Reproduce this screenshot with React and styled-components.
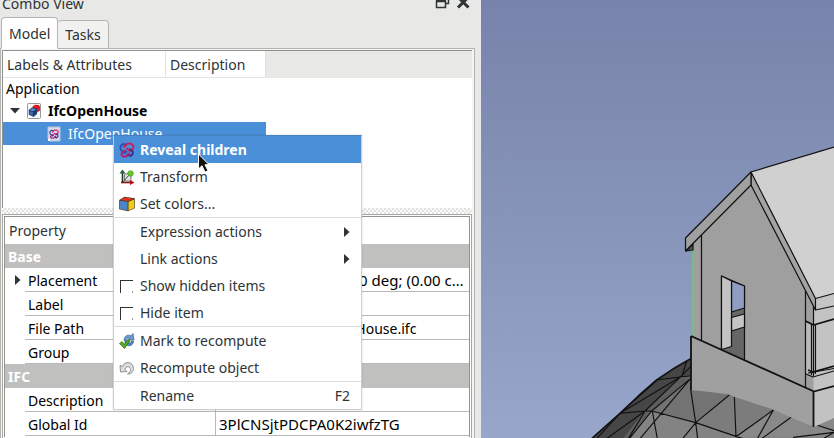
import React from "react";
import styled, { createGlobalStyle } from "styled-components";

const GlobalStyle = createGlobalStyle`
  * { box-sizing: border-box; }
  body {
    margin: 0;
    overflow: hidden;
    background: #e8e8e6;
    color: #2e3436;
    font: 14px/22px "Noto Sans", sans-serif;
    white-space: nowrap;
  }
  button, input { font: inherit; color: inherit; margin: 0; }
`;

const Window = styled.main`
  display: grid;
  grid-template-columns: minmax(0, 481fr) minmax(0, 353fr);
  height: 100vh;
  overflow: hidden;
`;

const Dock = styled.section`
  display: flex;
  flex-direction: column;
  min-width: 0;
  padding-right: 6px;
`;

const TitleBar = styled.header`
  display: flex;
  justify-content: space-between;
  height: 17px;
  padding: 0 4px 0 2px;
`;

const Title = styled.h1`
  margin: 0;
  font-size: 14px;
  font-weight: 400;
  line-height: 8px;
`;

const TitleButtons = styled.div`
  display: flex;
  gap: 6px;
`;

const TitleButton = styled.button`
  display: flex;
  width: 15px;
  height: 9px;
  padding: 0;
  border: 0;
  background: none;
`;

const TabBar = styled.div`
  display: flex;
  align-items: flex-end;
  height: 32px;
  padding-left: 1px;
  position: relative;
  z-index: 1;
`;

const Tab = styled.button`
  height: ${(p) => (p.$active ? 32 : 29)}px;
  padding: ${(p) => (p.$active ? 2 : 0)}px 7px 0;
  border: 1px solid #b4b4b1;
  border-left-width: ${(p) => (p.$active ? 1 : 0)}px;
  border-bottom-color: ${(p) => (p.$active ? "#fff" : "#b4b4b1")};
  border-radius: 4px 4px 0 0;
  background: ${(p) => (p.$active ? "#fff" : "#f1f1f0")};
`;

const Pane = styled.div`
  display: flex;
  flex: 1;
  flex-direction: column;
  margin-top: -1px;
  padding: 1px 2px 0 1px;
  border: solid #b4b4b1;
  border-width: 1px 1px 0 1px;
  background: #f4f4f3;
`;

const TreeFrame = styled.div`
  flex: 0 0 158px;
  border: solid #92928f;
  border-width: 1px 0 0 1px;
  background: #fff;
`;

const TreeHeader = styled.div`
  display: grid;
  grid-template-columns: 163px 100px 1fr;
  height: 27px;
  background: #e8e8e6;
`;

const HeaderCell = styled.div`
  padding: 3px 4px 1px;
  border: solid #e2e2e0;
  border-width: 0 1px 1px 0;
  background: #fff;
`;

const Tree = styled.ul`
  margin: 0;
  padding: 0;
  list-style: none;
  color: #000;
`;

const TreeItem = styled.li`
  display: flex;
  align-items: center;
  gap: 6px;
  width: ${(p) => (p.$selected ? "263px" : "auto")};
  height: ${(p) => (p.$selected ? 23 : 22)}px;
  padding-left: ${(p) => p.$indent}px;
  background: ${(p) => (p.$selected ? "#4a90d9" : "none")};
  color: ${(p) => (p.$selected ? "#fff" : "#000")};
  font-weight: ${(p) => (p.$bold ? 700 : 400)};
`;

const Splitter = styled.div`
  flex: 0 0 6px;
  background: repeating-conic-gradient(#e2e2e0 0 25%, #fafafa 0 50%) 0 0 / 4px 4px;
`;

const PropertyOuter = styled.div`
  flex: 1;
  padding: 1px;
  border: solid #a8a8a5;
  border-width: 1px 1px 0 1px;
  background: #fff;
`;

const PropertyFrame = styled.div`
  height: 100%;
  border: solid #92928f;
  border-width: 1px 1px 0 1px;
`;

const PropertyTable = styled.table`
  width: 100%;
  border-collapse: separate;
  border-spacing: 0;
  table-layout: fixed;
  color: #000;
  line-height: 20px;
  text-align: left;

  th, td { padding: 0; overflow: hidden; font-weight: 400; }
`;

const PropertyHeader = styled.th`
  height: 27px;
  line-height: 27px;
  color: #2e3436;

  && { padding-left: 4px; }
`;

const GroupCell = styled.th`
  height: 24px;
  background: #c0c0be;
  color: #fff;

  && { padding: 1px 0 0 3px; font-weight: 700; }
`;

const IndentCell = styled.td`
  height: 24px;
  line-height: 0;

  && { padding-left: 10px; }
`;

const NameCell = styled.th`
  height: 24px;
  border: solid #b8b8b6;
  border-width: 0 1px 1px 0;

  && { padding: 2px 0 0 3px; }
`;

const ValueCell = styled.td`
  height: 24px;
  border-bottom: 1px solid #b8b8b6;
  font-size: ${(p) => (p.$code ? 15 : 14)}px;

  && { padding: ${(p) => (p.$code ? 0 : 2)}px 0 0 3px; }
`;

const Viewport = styled.svg`
  display: block;
  width: 100%;
  height: 100%;
`;

const Menu = styled.div`
  position: absolute;
  top: 135px;
  left: 113px;
  z-index: 2;
  width: 249px;
  border: 1px solid #cfcfcd;
  border-top-color: #4581c1;
  background: #fff;
  box-shadow: 0 0 2px rgba(0, 0, 0, 0.15);
`;

const menuRow = `
  display: grid;
  grid-template-columns: 16px 1fr auto;
  align-items: center;
  column-gap: 5px;
  width: 100%;
  height: 27px;
  padding: 1px 11px 0 5px;
  border: 0;
  text-align: left;
`;

const MenuItem = styled.button`
  ${menuRow}
  background: ${(p) => (p.$active ? "#4a90d9" : "#fff")};

  && {
    color: ${(p) => (p.$active ? "#fff" : "#2e3436")};
    font-weight: ${(p) => (p.$active ? 700 : 400)};
  }
`;

const MenuCheck = styled.label`
  ${menuRow}
`;

const CheckBox = styled.input`
  appearance: none;
  width: 13px;
  height: 13px;
  margin-left: 1px;
  border: solid #2e3436;
  border-width: 1px 0 0 1px;
  background: radial-gradient(circle at 12px 11px, #999 0 1px, #fff 1px);
`;

const Separator = styled.hr`
  height: 1px;
  margin: 0;
  border: 0;
  background: #dcdcda;
`;

const Pointer = styled.svg`
  position: absolute;
  top: 153px;
  left: 197px;
  z-index: 3;
`;

const Icon = ({ size = 16, children }) => (
  <svg width={size} height={size} viewBox="0 0 16 16" aria-hidden="true">
    {children}
  </svg>
);

const Rings = () => (
  <g fill="none" strokeWidth="1.8" strokeLinejoin="round" strokeLinecap="round">
    <path d="M7.500 9.500 5.500 11 1.500 7.500V4L4 2 6.500 2.500" stroke="#2a4fae" />
    <path d="M5 5 8.500 1.700H12L14.500 4 14 6.500 11 9 8 6.500" stroke="#dd1450" />
    <path d="M11 7.500 13.800 9.500V12L11.500 14 8.500 12.500" stroke="#2f318f" />
    <path d="M6 8.500 2.500 11.500 2.500 13 4.500 14.500H7L10.500 11.500" stroke="#bb1670" />
  </g>
);

const IfcIcon = () => (
  <Icon>
    <Rings />
  </Icon>
);

const IfcDocIcon = () => (
  <Icon>
    <path d="M2 1h12v14H4l-2-2z" fill="#d6dded" stroke="#b4c3dd" />
    <g transform="translate(3 3) scale(.64)">
      <Rings />
    </g>
    <path d="M2 12l3 3H2z" fill="#fff" />
  </Icon>
);

const DocumentIcon = () => (
  <Icon>
    <rect x="1.5" y=".5" width="13" height="15" rx="1" fill="#f7f7f7" stroke="#999" />
    <path d="M6.500 3.500 9 1.700l4 .300 1 2V7.500l-3 2-4.500-3z" fill="#dc1c1c" />
    <path d="M2.700 7 6 4.500l5 1v5.500L7.500 14l-4.800-2.500z" fill="#1c3e74" />
    <path d="M3.700 7 6.200 5.400l3.800.800L7.200 8z" fill="#6791c9" />
    <path d="M3.500 8 6.800 9v3.600l-3.300-1.700z" fill="#3b69ad" />
  </Icon>
);

const TransformIcon = () => (
  <Icon>
    <path d="M5.500 5.500 10 4l2 3v5H5.500z" fill="#e3e6e0" stroke="#777" />
    <path d="M3.500 14V3" stroke="#173f24" strokeWidth="1.600" />
    <path d="M.500 4.500 3.500.500l3 4z" fill="#245b34" />
    <path d="M2 13.500h11" stroke="#8c1212" strokeWidth="1.600" />
    <path d="M11 11l4.500 2.500L11 16z" fill="#b41212" />
    <path d="M4 13l6-7" stroke="#444" />
    <circle cx="11.500" cy="4.500" r="2.800" fill="#65c72b" stroke="#438c1c" strokeWidth=".600" />
  </Icon>
);

const ColorsIcon = () => (
  <Icon>
    <path d="M.200 4 5.500.800l10.300 1.500v10L9 15.300.200 13.300z" fill="#4a3a22" />
    <path d="M1.300 4 5.700 1.500l9 1.200L9 5z" fill="#e8301f" />
    <path d="M.900 4.700 8.600 5.800v8.600L.900 12.700z" fill="#4d86c6" />
    <path d="M9.500 5.800 15.200 3.500v8.400l-5.700 2.500z" fill="#f0cc12" />
  </Icon>
);

const MarkIcon = () => (
  <Icon>
    <path d="M5 7.500C5 3 9 1 12 3l2-2.500 1 6.500H9l1.500-2C8.500 4 7 5.500 7 7.500z" fill="#6b9ad5" stroke="#33629f" strokeWidth=".700" />
    <path d="M14.500 8c0 4-4 6-7 4L6 13.500V8h5l-1.500 2c1.500.500 3-.500 3-2z" fill="#4f83c4" stroke="#33629f" strokeWidth=".700" />
    <path d="M.500 10.500 3 8.500l2.500 3L9 6l2 1.500-5.500 8z" fill="#59ad20" stroke="#2d6b0a" strokeWidth=".700" />
  </Icon>
);

const RecomputeIcon = () => (
  <Icon>
    <path
      d="M1 5.500 1.500 12 8 11.500 6 9.500C7 5.500 11.500 6 11.500 9.500c0 2-1 3-3 4.500C12.500 14 14.500 11.500 14.500 8.500 14.500 2 6 0 3.500 6.500z"
      fill="#dcdcdc"
      stroke="#858585"
      strokeWidth=".900"
    />
  </Icon>
);

const Arrow = ({ down }) => (
  <svg width={down ? 10 : 6} height={down ? 6 : 10} viewBox={down ? "0 0 10 6" : "0 0 6 10"} aria-hidden="true">
    <path d={down ? "M0 0h10L5 5.500z" : "M0 0v10l5.500-5z"} fill="#2e3436" />
  </svg>
);

const properties = [
  { group: "Base" },
  { name: "Placement", value: "[(0.00 0.00 1.00); 0.00 deg; (0.00 c…", code: true, expandable: true },
  { name: "Label", value: "IfcOpenHouse" },
  { name: "File Path", value: "/home/local/IfcOpenHouse.ifc" },
  { name: "Group", value: "" },
  { group: "IFC" },
  { name: "Description", value: "" },
  { name: "Global Id", value: "3PlCNSjtPDCPA0K2iwfzTG", code: true },
];

function Properties() {
  return (
    <PropertyTable>
      <colgroup>
        <col width="20" />
        <col width="191" />
        <col />
      </colgroup>
      <thead>
        <tr>
          <PropertyHeader colSpan={3}>Property</PropertyHeader>
        </tr>
      </thead>
      <tbody>
        {properties.map((row) =>
          row.group ? (
            <tr key={row.group}>
              <GroupCell colSpan={3}>{row.group}</GroupCell>
            </tr>
          ) : (
            <tr key={row.name}>
              <IndentCell>{row.expandable && <Arrow />}</IndentCell>
              <NameCell scope="row">{row.name}</NameCell>
              <ValueCell $code={row.code}>{row.value}</ValueCell>
            </tr>
          )
        )}
      </tbody>
    </PropertyTable>
  );
}

function ContextMenu() {
  return (
    <Menu role="menu">
      <MenuItem $active role="menuitem"><IfcIcon />Reveal children</MenuItem>
      <MenuItem role="menuitem"><TransformIcon />Transform</MenuItem>
      <MenuItem role="menuitem"><ColorsIcon />Set colors...</MenuItem>
      <Separator />
      <MenuItem role="menuitem"><i /><span>Expression actions</span><Arrow /></MenuItem>
      <MenuItem role="menuitem"><i /><span>Link actions</span><Arrow /></MenuItem>
      <MenuCheck><CheckBox type="checkbox" />Show hidden items</MenuCheck>
      <MenuCheck><CheckBox type="checkbox" />Hide item</MenuCheck>
      <Separator />
      <MenuItem role="menuitem"><MarkIcon />Mark to recompute</MenuItem>
      <MenuItem role="menuitem"><RecomputeIcon />Recompute object</MenuItem>
      <Separator />
      <MenuItem role="menuitem"><i /><span>Rename</span><span>F2</span></MenuItem>
    </Menu>
  );
}

function House() {
  return (
    <Viewport viewBox="481 0 353 438" preserveAspectRatio="xMaxYMax slice" role="img" aria-label="House model">
      <defs>
        <linearGradient id="sky" x1="0" y1="0" x2="0" y2="1">
          <stop offset="0" stopColor="#7783aa" />
          <stop offset="1" stopColor="#98a6cb" />
        </linearGradient>
      </defs>
      <rect x="281" y="0" width="553" height="438" fill="url(#sky)" />

      <g transform="translate(580 270) scale(.33333)" stroke="#111" strokeWidth="3.500" strokeLinejoin="round" fill="none">
        <path d="M332 266 285 293 230 330 175 378 120 430 35 506H770V440L700 400 332 300z" fill="#838383" stroke="none" />
        <path d="M332 266 285 293 230 330 120 430 35 506H130L195 423 300 322 332 318z" fill="#464646" stroke="none" />
        <path d="M300 322 195 423 130 506H148L215 423 332 322z" fill="#5e5e5e" stroke="none" />
        <path d="M332 325 215 423 347 458 448 375 332 355z" fill="#737373" stroke="none" />
        <path d="M448 375 347 458 470 500 580 420z" fill="#7c7c7c" stroke="none" />
        <path d="M580 420 470 500H640L762 487V440z" fill="#898989" stroke="none" />
        <path d="M332 266 285 293 230 330 175 378 120 430 35 506" strokeWidth="5" />
        <path d="M230 330 300 321 332 318M320 274 305 321M332 290 300 322 120 430M230 332 120 430 195 423 215 423M300 322 195 423 80 506M120 430 50 506M195 423 145 506M332 325 215 423 148 506M215 423 347 458 470 500 490 506M217 423 232 506M332 358 347 458 353 506M448 375 347 458 308 506M463 380 468 500 580 420 532 506M635 440 545 506M640 502 762 487M710 465 762 482M762 487 730 506M332 325 180 506" />
      </g>

      <g stroke="#111" strokeWidth="1.200" strokeLinejoin="round">
        <path d="M814 391 834 386V418L814 427z" fill="#c2c2c2" stroke="none" />
        <path d="M691 336 814 391V427L790 417 772 409 735 397 728 394 691 390z" fill="#a0a0a0" stroke="none" />
        <path d="M693 244 751 185 816 308 814 391 693 337z" fill="#9f9f9f" stroke="none" />
        <path d="M813.500 310 834 305V386L813.500 391z" fill="#c3c3c3" stroke="none" />
        <path d="M806 322 813 325V376L806 373z" fill="#bababa" stroke="none" />
        <path d="M693 245V336" stroke="#65d667" />
        <path d="M701.500 235V340M805.500 291V388M813.500 306V325" fill="none" />
        <path d="M691 336 814 391.500 834 386M691 336V390M813.500 391V427" fill="none" strokeWidth="1.800" />
        <path d="M721.500 276 744.500 286V360L721.500 349.500z" fill="#666" />
        <path d="M731.500 281 744.500 286V308L731.500 312z" fill="#8f9dc2" />
        <path d="M731.500 317.500 744.500 314V327L731.500 331z" fill="#c5c5c5" />
        <path d="M721.500 276 731.500 281V346.500L721.500 349.500z" fill="#c3c3c3" />
        <path d="M805.500 321 813.500 325 834 319M808 370 813 372 834 366" fill="none" strokeWidth="1.700" />
        <path d="M811.500 324V375M813.500 325V376M815.500 325V374M806 374 813 377 834 371M808 373 834 368.500" fill="none" />
        <path d="M686 251 693 244V250z" fill="#555" />
        <path d="M751 172 834 147V306L815.500 310z" fill="#c5c5c5" stroke="none" />
        <path d="M751 172 834 147V293L815.500 298.500z" fill="#d0d0d0" stroke="none" />
        <path d="M834 147 751 172M815.500 298.500 834 293.500M815.500 310 834 306" fill="none" />
        <path d="M751 172 815.500 298.500V310L751 185z" fill="#a3a3a3" />
        <path d="M751 172 685.500 238V251L751 185z" fill="#a0a0a0" />
      </g>
    </Viewport>
  );
}

export default function App() {
  return (
    <>
      <GlobalStyle />
      <Window>
        <Dock>
          <TitleBar>
            <Title>Combo View</Title>
            <TitleButtons>
              <TitleButton aria-label="Float panel">
                <svg width="15" height="9" viewBox="0 0 15 9" fill="none" stroke="#2e3436">
                  <path d="M1.500 1.500h9v6h-9z" strokeWidth="1.500" />
                  <path d="M1 1h10" strokeWidth="2" />
                  <path d="M10 3.500h3.500V0" strokeWidth="1.500" />
                </svg>
              </TitleButton>
              <TitleButton aria-label="Close panel">
                <svg width="15" height="9" viewBox="0 0 15 9" fill="none" stroke="#2e3436" strokeWidth="3">
                  <path d="M2 7.500 12-2.500M12.500 7.500 2.500-2.500" />
                </svg>
              </TitleButton>
            </TitleButtons>
          </TitleBar>
          <TabBar role="tablist">
            <Tab $active role="tab" aria-selected="true">Model</Tab>
            <Tab role="tab" aria-selected="false">Tasks</Tab>
          </TabBar>
          <Pane>
            <TreeFrame>
              <TreeHeader>
                <HeaderCell>Labels &amp; Attributes</HeaderCell>
                <HeaderCell>Description</HeaderCell>
              </TreeHeader>
              <Tree role="tree">
                <TreeItem role="treeitem" $indent={3}>Application</TreeItem>
                <TreeItem role="treeitem" $indent={7} $bold>
                  <Arrow down />
                  <DocumentIcon />
                  IfcOpenHouse
                </TreeItem>
                <TreeItem role="treeitem" aria-selected="true" $indent={43} $selected>
                  <IfcDocIcon />
                  IfcOpenHouse
                </TreeItem>
              </Tree>
            </TreeFrame>
            <Splitter />
            <PropertyOuter>
              <PropertyFrame>
                <Properties />
              </PropertyFrame>
            </PropertyOuter>
          </Pane>
        </Dock>
        <House />
      </Window>
      <ContextMenu />
      <Pointer width="13" height="21" viewBox="0 0 13 21" aria-hidden="true">
        <path d="M1.500 1v15l3.500-3.300 3 6.500 3-1.500-3-6H12z" fill="#111" stroke="#fff" />
      </Pointer>
    </>
  );
}
